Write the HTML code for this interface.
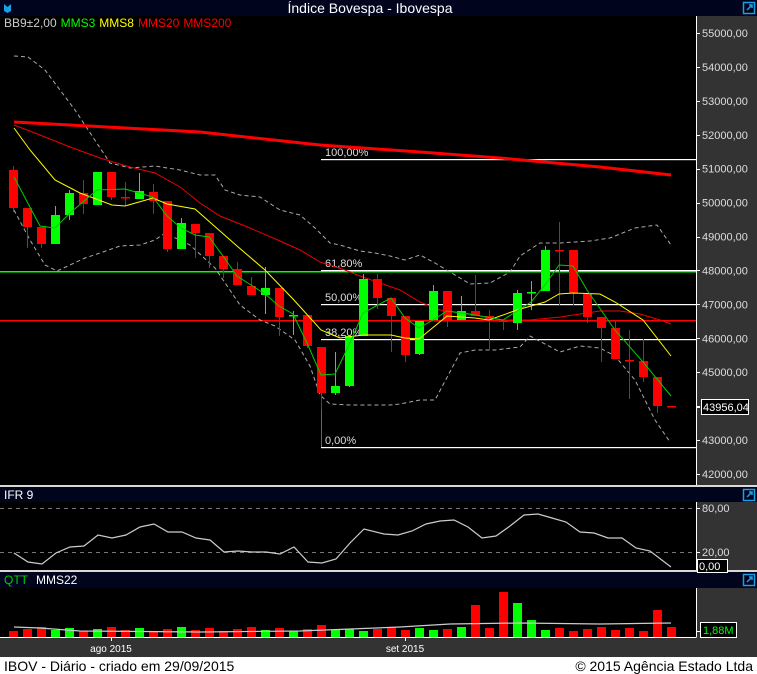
<!DOCTYPE html>
<html><head><meta charset="utf-8">
<style>
html,body{margin:0;padding:0;background:#fff;}
body{width:757px;height:674px;overflow:hidden;position:relative;font-family:"Liberation Sans",sans-serif;}
svg{position:absolute;left:0;top:0;}
</style></head><body>
<svg id="s" width="757" height="674" xmlns="http://www.w3.org/2000/svg" font-family="Liberation Sans, sans-serif">
<rect x="0" y="0" width="757" height="657" fill="#333333"/>
<rect x="0" y="0" width="757" height="16" fill="#00041c"/>
<rect x="0" y="16" width="696" height="469" fill="#000"/>
<rect x="0" y="485" width="757" height="2" fill="#d8d8d8"/>
<rect x="0" y="487" width="757" height="15" fill="#00041c"/>
<rect x="0" y="502" width="696" height="68" fill="#000"/>
<rect x="0" y="570" width="757" height="2" fill="#d8d8d8"/>
<rect x="0" y="572" width="757" height="16" fill="#00041c"/>
<rect x="0" y="588" width="696" height="49" fill="#000"/>
<rect x="0" y="657" width="757" height="17" fill="#fff"/>
<g fill="none" stroke="#fff" stroke-width="1">
<line x1="696.5" y1="16" x2="696.5" y2="485"/>
<line x1="696.5" y1="502" x2="696.5" y2="570"/>
<line x1="696.5" y1="588" x2="696.5" y2="637.5"/>
<line x1="0" y1="637.5" x2="696" y2="637.5"/>
</g>
<path d="M4 4 L4 11 L7.5 13 L11 11 L11 4 L7.5 7 Z" fill="#1aa0e8"/>
<text x="370" y="13" fill="#fff" font-size="14" text-anchor="middle">Índice Bovespa - Ibovespa</text>
<text x="4" y="27" font-size="12"><tspan fill="#ccc">BB9±2,00</tspan><tspan fill="#0f0" dx="4">MMS3</tspan><tspan fill="#ff0" dx="4">MMS8</tspan><tspan fill="#f00" dx="4">MMS20</tspan><tspan fill="#f00" dx="4">MMS200</tspan></text>
<text x="4" y="499" fill="#fff" font-size="12">IFR 9</text>
<text x="4" y="584" font-size="12"><tspan fill="#0c0">QTT</tspan><tspan fill="#fff" dx="8">MMS22</tspan></text>
<text x="4" y="671" fill="#000" font-size="14">IBOV - Diário - criado em 29/09/2015</text>
<text x="753" y="671" fill="#000" font-size="14" text-anchor="end">© 2015 Agência Estado Ltda</text>
<g id="g"></g>
</svg>
<script>
var g=document.getElementById('g'),h='';
function pl(pts,c,w,d){h+='<polyline fill="none" stroke="'+c+'" stroke-width="'+(w||1)+'"'+(d?' stroke-dasharray="'+d+'"':'')+' points="'+pts.map(function(p){return p.join(',')}).join(' ')+'"/>';}
function r(x,y,w,hh,c){h+='<rect x="'+x+'" y="'+y+'" width="'+w+'" height="'+hh+'" fill="'+c+'"/>';}
function t(x,y,s,c,fs,a){h+='<text x="'+x+'" y="'+y+'" fill="'+c+'" font-size="'+(fs||11)+'"'+(a?' text-anchor="'+a+'"':'')+'>'+s+'</text>';}
for(var i=0;i<14;i++){var v=55000-i*1000,y=33+i*33.92;r(697,Math.round(y),3,1,'#fff');t(702,y+4,v+',00','#ddd',11);}
r(701,399,48,16,'#000');h+='<rect x="701.5" y="399.5" width="47" height="15" fill="none" stroke="#fff"/>';t(703,411,'43956,04','#fff',11);r(697,407,3,1,'#fff');
[[743,2],[743,489],[743,574]].forEach(function(p){h+='<rect x="'+(p[0]+0.5)+'" y="'+(p[1]+0.5)+'" width="11" height="11" fill="none" stroke="#1aa0e8" stroke-width="1.5"/><path d="M'+(p[0]+4)+' '+(p[1]+8)+' L'+(p[0]+9)+' '+(p[1]+3)+' M'+(p[0]+6)+' '+(p[1]+3)+' L'+(p[0]+9)+' '+(p[1]+3)+' L'+(p[0]+9)+' '+(p[1]+6)+'" stroke="#1aa0e8" stroke-width="1.5" fill="none"/>';});
r(0,271,696,1.5,'#0f0');r(0,320,696,1.5,'#f00');
[[159,'100,00%'],[270,'61,80%'],[304,'50,00%'],[339,'38,20%'],[447,'0,00%']].forEach(function(f){r(321,f[0],375,1.2,'#fff');t(325,f[0]-3,f[1],'#ddd',11);});
r(321,395,1,52,'#666');
pl([[14,56],[28,57],[45,70],[60,90],[75,110],[110,163],[130,168],[155,166],[180,170],[200,175],[215,175],[225,190],[240,195],[260,197],[280,210],[300,215],[315,228],[330,243],[340,245],[360,251],[375,253],[390,256],[405,260],[420,255],[435,263],[450,272],[470,284],[490,283],[510,272],[520,256],[540,243],[560,243],[575,242],[590,241],[610,238],[635,228],[657,225],[671,245]],'#aaa',1,'4,3');
pl([[14,210],[30,240],[45,265],[57,271],[85,258],[100,253],[120,246],[140,245],[155,240],[165,233],[190,245],[215,268],[240,305],[260,320],[275,326],[295,340],[310,366],[320,395],[330,404],[350,405],[390,405],[400,404],[420,400],[435,400],[460,353],[475,350],[495,350],[520,347],[530,336],[560,352],[580,346],[600,348],[615,356],[635,380],[655,420],[670,442]],'#aaa',1,'4,3');
pl([[14,122],[200,132],[320,145],[420,152],[500,158],[600,167],[671,175]],'#f00',3);
pl([[14,125],[40,135],[70,147],[100,158],[130,167],[155,173],[180,187],[200,203],[220,216],[250,228],[280,241],[300,250],[320,262],[345,270],[360,276],[380,283],[400,290],[420,302],[440,310],[470,314],[500,320],[530,320],[560,317],[580,314],[600,311],[620,311],[640,314],[660,320],[671,324]],'#e00',1);
var G='#0f0',R='#f00';
var c=[[13,170,208,166,212,R],[27,208,227,208,248,R],[41,227,244,227,248,R],[55,215,244,206,244,G],[69,193,215,190,220,G],[83,193,204,180,214,R],[97,172,205,172,205,G],[111,172,197,172,200,R],[125,197,198,182,206,R],[139,191,199,173,199,G],[153,192,201,184,214,R],[167,201,249,201,252,R],[181,223,249,218,249,G],[195,224,233,224,258,R],[209,233,256,233,268,R],[223,256,269,256,278,R],[237,269,285,262,285,R],[251,286,295,277,295,R],[265,288,295,267,314,G],[279,288,317,288,336,R],[293,315,316,311,335,G],[307,315,346,315,348,R],[321,347,393,347,410,R],[335,386,393,352,395,G],[349,336,386,336,387,G],[363,279,336,274,336,G],[377,279,298,274,309,R],[391,298,316,298,352,R],[405,316,355,316,362,R],[419,321,354,321,355,G],[433,291,320,285,320,G],[447,291,321,291,327,R],[461,311,320,296,320,G],[475,311,316,275,316,R],[489,316,320,310,350,R],[503,320,322,320,330,R],[517,293,323,290,330,G],[531,292,293,281,310,G],[545,250,291,246,291,G],[559,250,251,222,305,R],[573,250,293,250,305,R],[587,294,317,294,323,R],[601,317,328,317,362,R],[615,328,359,320,359,R],[629,360,361,330,399,R],[643,361,377,339,382,R],[657,377,406,377,413,R],[671,406,407,406,407,R]];
c.forEach(function(k){r(k[0],k[3],1,k[4]-k[3],k[5]);var bh=k[2]-k[1];if(bh<2){r(k[0]-4,k[1],9,1.5,k[5]);}else r(k[0]-4,k[1],9,bh,k[5]);});
pl([[14,128],[30,150],[55,180],[80,193],[112,205],[125,206],[153,198],[167,204],[195,209],[237,246],[265,270],[293,299],[321,330],[340,338],[363,335],[391,335],[405,338],[419,339],[447,316],[475,318],[489,320],[517,310],[545,302],[559,294],[573,293],[600,294],[615,302],[643,320],[671,356]],'#ff0',1);
pl([[14,177],[40,226],[55,228],[70,213],[97,190],[125,189],[153,197],[167,216],[181,228],[195,235],[209,237],[223,256],[237,276],[251,285],[265,294],[279,306],[293,314],[307,343],[321,375],[335,374],[349,345],[363,313],[391,298],[405,318],[419,328],[433,320],[447,311],[475,315],[503,320],[531,302],[545,285],[559,265],[573,266],[587,290],[615,330],[643,362],[671,396]],'#0c0',1);
h+='<line x1="0" y1="508.5" x2="696" y2="508.5" stroke="#777" stroke-dasharray="4,4"/><line x1="0" y1="552.5" x2="696" y2="552.5" stroke="#777" stroke-dasharray="4,4"/>';
r(697,508,3,1,'#fff');r(697,552,3,1,'#fff');t(702,512,'80,00','#ddd',11);t(702,556,'20,00','#ddd',11);
h+='<rect x="697.5" y="559.5" width="30" height="13" fill="#000" stroke="#fff"/>';t(699,570,'0,00','#fff',11);
pl([[14,553],[28,562],[42,564],[56,553],[70,547],[84,546],[98,535],[112,538],[126,535],[140,527],[154,524],[168,532],[182,532],[196,538],[210,540],[224,552],[238,551],[252,552],[266,552],[280,554],[294,547],[308,562],[322,563],[336,559],[350,543],[364,529],[384,534],[398,535],[412,531],[426,524],[440,521],[454,520],[468,527],[482,538],[496,536],[510,526],[524,515],[538,514],[552,518],[566,522],[580,532],[594,533],[608,538],[622,538],[636,548],[650,551],[671,567]],'#ccc',1.2);
var vh={475:32,503:45,517:34,531:17,657:27,321:12,349:8,405:7,433:7};
c.forEach(function(k,i){var hh=vh[k[0]]||(6+((i*7)%5));r(k[0]-4,637-hh,9,hh,k[5]);});
pl([[14,627],[40,628],[80,631],[200,632],[300,631],[400,627],[450,624],[520,623],[600,624],[671,623]],'#ccc',1.2);
r(697,631,3,1,'#fff');
h+='<rect x="700.5" y="622.5" width="36" height="15" fill="#000" stroke="#fff"/>';t(703,634,'1,88M','#0f0',11);
r(111,637,1,4,'#fff');r(405,637,1,4,'#fff');
t(111,652,'ago 2015','#fff',10,'middle');t(405,652,'set 2015','#fff',10,'middle');
g.innerHTML=h;
</script>
</body></html>
